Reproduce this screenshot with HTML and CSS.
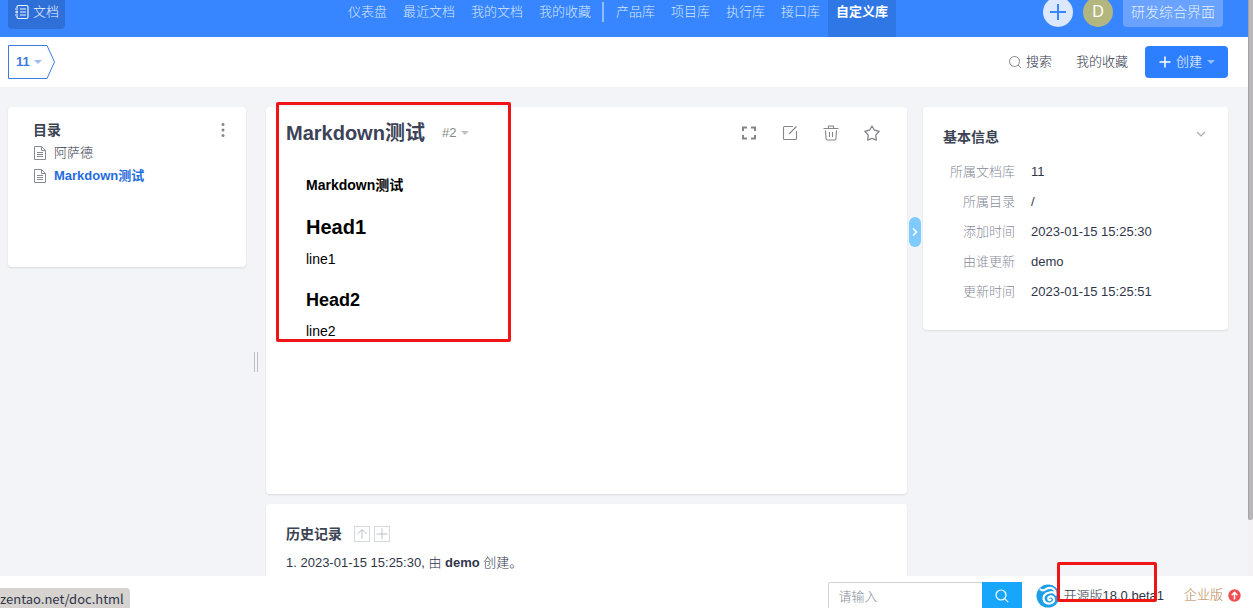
FILE: index.html
```html
<!DOCTYPE html>
<html lang="zh-CN">
  <head>
    <meta charset="UTF-8" />
    <meta name="viewport" content="width=device-width, initial-scale=1.0" />
    <title>Markdown测试</title>
    <link rel="stylesheet" href="styles.css">
  </head>
  <body>
    <div class="viewport">
      <div class="page">
        <header class="header">
          <div class="header-left">
            <a class="app-btn" href="#">
              <svg width="16" height="16" viewBox="0 0 16 16" fill="none" stroke="currentColor" stroke-width="1.200">
                <path d="M3 4V3q0-1.500 1.500-1.500h8Q14 1.500 14 3v10q0 1.500-1.500 1.500h-8Q3 14.500 3 13v-1M3 6.500v3M1 5h3M1 8h3M1 11h3M6 5h6M6 8h6M6 11h6" />
              </svg>
              文档
            </a>
          </div>
          <nav class="nav">
            <a href="#">仪表盘</a>
            <a href="#">最近文档</a>
            <a href="#">我的文档</a>
            <a href="#">我的收藏</a>
            <span class="nav-divider"></span>
            <a href="#">产品库</a>
            <a href="#">项目库</a>
            <a href="#">执行库</a>
            <a href="#">接口库</a>
            <a href="#" class="active">自定义库</a>
          </nav>
          <div class="header-right">
            <button class="circle add-btn" aria-label="添加">
              <svg width="18" height="18" viewBox="0 0 18 18" stroke="currentColor" stroke-width="2">
                <path d="M9 1v16M1 9h16" />
              </svg>
            </button>
            <button class="circle avatar">D</button>
            <button class="vision-btn">研发综合界面</button>
          </div>
        </header>

        <div class="toolbar">
          <button class="lib-btn">
            <svg class="lib-shape" width="48" height="34" viewBox="0 0 48 34" fill="none" stroke="currentColor">
              <path d="M.5.500h38.500l7.500 16.500-7.500 16.500H.5z" />
            </svg>
            11 <span class="caret"></span>
          </button>
          <div class="toolbar-right">
            <a href="#" class="search-link">
              <svg width="14" height="14" viewBox="0 0 14 14" fill="none" stroke="#888" stroke-width="1">
                <circle cx="6.500" cy="6.500" r="5" />
                <path d="M10.100 10.100l3 3" />
              </svg>
              搜索
            </a>
            <a href="#">我的收藏</a>
            <button class="create-btn">
              <svg width="12" height="12" viewBox="0 0 12 12" stroke="currentColor" stroke-width="1.500">
                <path d="M6 .500v11M.5 6h11" />
              </svg>
              创建
              <span class="caret"></span>
            </button>
          </div>
        </div>

        <main class="content">
          <aside class="card catalog">
            <div class="catalog-head">
              <h2>目录</h2>
              <button class="icon-btn" aria-label="更多">
                <svg width="4" height="16" viewBox="0 0 4 16" fill="currentColor">
                  <circle cx="2" cy="2.500" r="1.500" />
                  <circle cx="2" cy="8" r="1.500" />
                  <circle cx="2" cy="13.500" r="1.500" />
                </svg>
              </button>
            </div>
            <ul>
              <li>
                <svg width="13" height="14" viewBox="0 0 13 14" fill="none" stroke="#888b94">
                  <path d="M1.500.500h7l4 4v9h-11zM8.500.500v4h4M4 6.500h6M4 8.500h6M4 10.500h6" />
                </svg>
                <a href="#">阿萨德</a>
              </li>
              <li class="active">
                <svg width="13" height="14" viewBox="0 0 13 14" fill="none" stroke="#888b94">
                  <path d="M1.500.500h7l4 4v9h-11zM8.500.500v4h4M4 6.500h6M4 8.500h6M4 10.500h6" />
                </svg>
                <a href="#">Markdown测试</a>
              </li>
            </ul>
          </aside>

          <div class="splitter"><span></span></div>

          <div class="main-col">
            <article class="card doc">
              <div class="doc-head">
                <h1>Markdown测试</h1>
                <button class="version-btn">#2 <span class="caret"></span></button>
                <div class="doc-actions">
                  <button class="icon-btn" aria-label="全屏">
                    <svg width="16" height="16" viewBox="0 0 16 16" fill="none" stroke="currentColor" stroke-width="2">
                      <path d="M2 6V2.500h4M10 2.500h4V6M14 10v3.500h-4M6 13.500H2V10" />
                    </svg>
                  </button>
                  <button class="icon-btn" aria-label="编辑">
                    <svg width="16" height="16" viewBox="0 0 16 16" fill="none" stroke="currentColor" stroke-width="1.100">
                      <path d="M11 1.500H2.500q-1 0-1 1v11q0 1 1 1h11q1 0 1-1V6M7 9l7.500-7.500" />
                    </svg>
                  </button>
                  <button class="icon-btn" aria-label="删除">
                    <svg width="16" height="16" viewBox="0 0 16 16" fill="none" stroke="currentColor" stroke-width="1.100">
                      <path d="M.5 3.500h15M5.500 3.500V1h5v2.500M2.500 5.500l.6 8.500q.1 1 1 1h7.800q.9 0 1-1l.6-8.500M6.500 7v5M9.500 7v5" />
                    </svg>
                  </button>
                  <button class="icon-btn" aria-label="收藏">
                    <svg width="16" height="16" viewBox="0 0 16 16" fill="none" stroke="currentColor" stroke-width="1.300" stroke-linejoin="round">
                      <path d="M8 1l2.300 4 4.900 1.300-3.400 3.800.5 5L8 13.300l-4.300 1.800.5-5L.8 6.300 5.700 5z" />
                    </svg>
                  </button>
                </div>
              </div>
              <div class="markdown">
                <h4>Markdown测试</h4>
                <h2>Head1</h2>
                <p>line1</p>
                <h3>Head2</h3>
                <p>line2</p>
              </div>
              <div class="mark mark-doc"></div>
            </article>

            <section class="card history">
              <div class="history-head">
                <h2>历史记录</h2>
                <button class="box-btn" aria-label="排序">
                  <svg width="14" height="14" viewBox="0 0 14 14" fill="none" stroke="currentColor">
                    <path d="M7 12V2.500M2.500 7L7 2.500 11.500 7" />
                  </svg>
                </button>
                <button class="box-btn" aria-label="展开">
                  <svg width="14" height="14" viewBox="0 0 14 14" fill="none" stroke="currentColor">
                    <path d="M7 1.500v11M1.500 7h11" />
                  </svg>
                </button>
              </div>
              <p>1. 2023-01-15 15:25:30, 由 <strong>demo</strong> 创建。</p>
            </section>
          </div>

          <div class="side-toggle">
            <button aria-label="收起">
              <svg width="6" height="8" viewBox="0 0 6 8" fill="none" stroke="currentColor" stroke-width="1.500">
                <path d="M1 .500L4.500 4 1 7.500" />
              </svg>
            </button>
          </div>

          <aside class="card info">
            <div class="info-head">
              <h2>基本信息</h2>
              <button class="icon-btn" aria-label="折叠">
                <svg width="10" height="6" viewBox="0 0 10 6" fill="none" stroke="#a6aab8" stroke-width="1.200">
                  <path d="M1 1l4 4 4-4" />
                </svg>
              </button>
            </div>
            <table>
              <tr><th>所属文档库</th><td>11</td></tr>
              <tr><th>所属目录</th><td>/</td></tr>
              <tr><th>添加时间</th><td>2023-01-15 15:25:30</td></tr>
              <tr><th>由谁更新</th><td>demo</td></tr>
              <tr><th>更新时间</th><td>2023-01-15 15:25:51</td></tr>
            </table>
          </aside>
        </main>
      </div>
      <div class="scrollbar"><span></span></div>
    </div>

    <footer class="footer">
      <div class="search-box">
        <input type="text" placeholder="请输入" aria-label="搜索" />
        <button aria-label="搜索">
          <svg width="14" height="14" viewBox="0 0 14 14" fill="none" stroke="currentColor" stroke-width="1.200">
            <circle cx="6" cy="6" r="5" />
            <path d="M9.600 9.600l3.600 3.600" />
          </svg>
        </button>
      </div>
      <a href="#" class="version">
        <svg width="24" height="24" viewBox="0 0 24 24">
          <circle cx="12" cy="12" r="11.500" fill="#1f9ee8" />
          <path d="M4.500 5.500Q7 7.500 10 5q5-2.500 8 .5 2 2 1.500 4.500-2.500-2.500-6-1.500Q7 10 7.500 15q1 5 6.500 4.500 4.500-1 4-4.500-1-3-4-2.500-2.500 1-1.500 3 1 1 2 .2" fill="none" stroke="#fff" stroke-width="2.200" stroke-linecap="round" />
        </svg>
        开源版18.0.beta1
      </a>
      <a href="#" class="upgrade">
        企业版
        <svg width="13" height="13" viewBox="0 0 13 13">
          <circle cx="6.500" cy="6.500" r="6.200" fill="#f04f50" />
          <path d="M6.500 10.500V3.500M3.700 6.200l2.800-2.800 2.800 2.800" fill="none" stroke="#fff" stroke-width="1.500" />
        </svg>
      </a>
      <div class="mark mark-version"></div>
      <div class="status-url">zentao.net/doc.html</div>
    </footer>
  </body>
</html>
```
FILE: styles.css
```css
* {
  margin: 0;
  padding: 0;
  box-sizing: border-box;
}

body {
  display: flex;
  flex-direction: column;
  height: 100vh;
  overflow: hidden;
  background-color: #f3f4f7;
  color: #30364a;
  font-family: "Liberation Sans", "Noto Sans CJK SC", sans-serif;
  font-size: 13px;
  font-weight: 300;
  line-height: 20px;
}

a {
  color: inherit;
  text-decoration: none;
}

button {
  border: none;
  background: none;
  color: inherit;
  font: inherit;
  cursor: pointer;
}

svg {
  display: block;
  flex: none;
}

ul {
  list-style: none;
}

strong {
  font-weight: bold;
}

.viewport {
  display: flex;
  flex: 1;
  min-height: 0;
}

.page {
  display: flex;
  flex-direction: column;
  flex: 1;
  min-width: 0;
  overflow: hidden;
}

.scrollbar {
  width: 5px;
  background-color: #f3f1f3;
}

.scrollbar span {
  display: block;
  height: 520px;
  max-height: 100%;
  background-color: #b9b7ba;
  border-left: 1px solid #a5a3a6;
  border-radius: 0 0 2px 2px;
}

.caret {
  display: inline-block;
  border: 4px solid transparent;
  border-top-color: currentColor;
  border-bottom: none;
  opacity: 0.5;
}

/* Header */
.header {
  display: grid;
  grid-template-columns: 1fr auto 1fr;
  grid-template-rows: 37px;
  align-items: end;
  height: 37px;
  padding: 0 25px 0 8px;
  background-color: #3785ff;
  color: #d6e6ff;
  overflow: hidden;
  flex: none;
}

.header-left {
  display: flex;
}

.app-btn {
  display: flex;
  align-items: center;
  gap: 3px;
  height: 34px;
  margin-bottom: 8px;
  padding: 0 6px;
  background-color: #2e70d8;
  border-radius: 4px;
  color: #eef4ff;
}

.nav {
  display: flex;
  align-items: center;
  height: 50px;
  padding-left: 5px;
}

.nav a {
  height: 50px;
  padding: 15px 8px;
}

.nav .active {
  background-color: #3077e6;
  color: #fff;
  font-weight: bold;
}

.nav-divider {
  width: 2px;
  height: 20px;
  margin: 0 4px 0 3px;
  background-color: #8fbaff;
}

.header-right {
  display: flex;
  justify-content: flex-end;
  gap: 10px;
  padding-bottom: 10px;
}

.circle {
  display: flex;
  align-items: center;
  justify-content: center;
  width: 30px;
  height: 30px;
  border-radius: 50%;
}

.add-btn {
  background-color: #dbe8ff;
  color: #3785ff;
}

.avatar {
  background-color: #b3b67e;
  color: #fff;
  font-size: 16px;
}

.vision-btn {
  height: 30px;
  padding: 0 8px;
  background-color: #69a3ff;
  border-radius: 4px;
  color: #e4eeff;
  font-size: 14px;
}

/* Toolbar */
.toolbar {
  display: flex;
  align-items: center;
  justify-content: space-between;
  height: 50px;
  padding: 0 20px 0 8px;
  background-color: #fff;
  flex: none;
}

.lib-btn {
  display: flex;
  align-items: center;
  gap: 4px;
  position: relative;
  width: 48px;
  height: 34px;
  padding-left: 8px;
  color: #3a7ce0;
  font-weight: bold;
}

.lib-shape {
  position: absolute;
  left: 0;
  top: 0;
}

.toolbar-right {
  display: flex;
  align-items: center;
}

.toolbar-right a {
  margin-right: 17px;
}

.toolbar-right .search-link {
  display: flex;
  align-items: center;
  gap: 4px;
  margin-right: 24px;
}

.create-btn {
  display: flex;
  align-items: center;
  gap: 5px;
  height: 32px;
  padding: 0 13px 0 14px;
  background-color: #2e7fff;
  border-radius: 4px;
  color: #fff;
}

/* Content */
.content {
  display: grid;
  grid-template-columns: 238px 20px minmax(0, 1fr) 16px 305px;
  align-items: start;
  flex: 1;
  min-height: 0;
  padding: 20px 20px 0 8px;
}

.card {
  background-color: #fff;
  border-radius: 4px;
  box-shadow: 0 1px 2px rgba(0, 0, 0, 0.1);
}

.card h2 {
  color: #3c4353;
  font-size: 14px;
}

.icon-btn {
  color: #85868c;
}

.catalog {
  min-height: 160px;
  padding: 13px 21px 13px 25px;
}

.catalog-head {
  display: flex;
  align-items: center;
  justify-content: space-between;
  margin-bottom: 1px;
}

.catalog li {
  display: flex;
  align-items: center;
  gap: 8px;
  height: 23px;
}

.catalog .active a {
  color: #1f6de0;
  font-weight: bold;
}

.splitter span {
  display: block;
  width: 4px;
  height: 20px;
  margin: 245px 0 0 8px;
  border: 1px solid #c0c0c2;
  border-width: 0 1px;
}

.main-col {
  display: flex;
  flex-direction: column;
  gap: 10px;
}

.doc {
  position: relative;
  min-height: 387px;
  padding: 11px 20px;
}

.doc-head {
  display: flex;
  align-items: center;
  gap: 17px;
  height: 30px;
}

.doc h1 {
  color: #3c4358;
  font-size: 20px;
}

.version-btn {
  display: flex;
  align-items: center;
  gap: 5px;
  color: #888;
}

.doc-actions {
  display: flex;
  gap: 25px;
  margin-left: auto;
  padding-right: 7px;
}

.markdown {
  padding: 27px 20px 0;
  color: #000;
  font-size: 14px;
}

.markdown h4 {
  font-size: 14px;
}

.markdown h2 {
  margin: 17px 0 7px;
  color: #000;
  font-size: 20px;
  line-height: 30px;
}

.markdown h3 {
  margin: 16px 0 6px;
  font-size: 18px;
  line-height: 30px;
}

.mark {
  position: absolute;
  border: 3px solid #f01414;
  border-radius: 2px;
  pointer-events: none;
}

.mark-doc {
  left: 10px;
  top: -5px;
  width: 235px;
  height: 240px;
}

.history {
  padding: 20px 20px 40px;
}

.history-head {
  display: flex;
  align-items: center;
  gap: 4px;
  margin-bottom: 9px;
}

.history-head h2 {
  margin-right: 8px;
}

.box-btn {
  border: 1px solid #d5d8df;
  color: #bcc0ca;
}

.side-toggle button {
  display: flex;
  align-items: center;
  justify-content: center;
  width: 12px;
  height: 30px;
  margin: 110px 0 0 2px;
  background-color: #7fcbff;
  border-radius: 6px;
  color: #fff;
}

.info {
  padding: 20px 20px 23px;
}

.info-head {
  display: flex;
  justify-content: space-between;
  margin-bottom: 10px;
  padding-right: 2px;
}

.info-head .icon-btn {
  height: 14px;
}

.info table {
  border-collapse: collapse;
}

.info th,
.info td {
  height: 30px;
}

.info th {
  width: 72px;
  color: #858a98;
  font-weight: 300;
  text-align: right;
}

.info td {
  padding-left: 16px;
}

/* Footer */
.footer {
  display: flex;
  align-items: flex-start;
  justify-content: flex-end;
  position: relative;
  height: 32px;
  padding: 6px 12px 0;
  background-color: #fff;
  flex: none;
}

.search-box {
  display: flex;
  margin-right: 14px;
}

.search-box input {
  width: 154px;
  height: 28px;
  padding: 0 10px;
  border: 1px solid #d0d3da;
  border-right: none;
  border-radius: 2px 0 0 0;
  font: inherit;
}

.search-box input::placeholder {
  color: #858a98;
}

.search-box button {
  display: flex;
  align-items: center;
  justify-content: center;
  width: 40px;
  height: 28px;
  background-color: #18a6fd;
  color: #fff;
}

.version {
  display: flex;
  align-items: center;
  gap: 4px;
  margin: 2px 20px 0 0;
}

.upgrade {
  display: flex;
  align-items: center;
  gap: 5px;
  margin-top: 3px;
  color: #b97f4a;
}

.mark-version {
  right: 96px;
  top: -14px;
  width: 100px;
  height: 40px;
}

.status-url {
  position: absolute;
  left: 0;
  bottom: 0;
  height: 20px;
  padding: 2px 6px 0 0;
  background-color: #d6d3d0;
  border-top-right-radius: 4px;
  font-family: "Noto Sans CJK SC", sans-serif;
  font-size: 13px;
  font-weight: normal;
  line-height: 18px;
}
```
